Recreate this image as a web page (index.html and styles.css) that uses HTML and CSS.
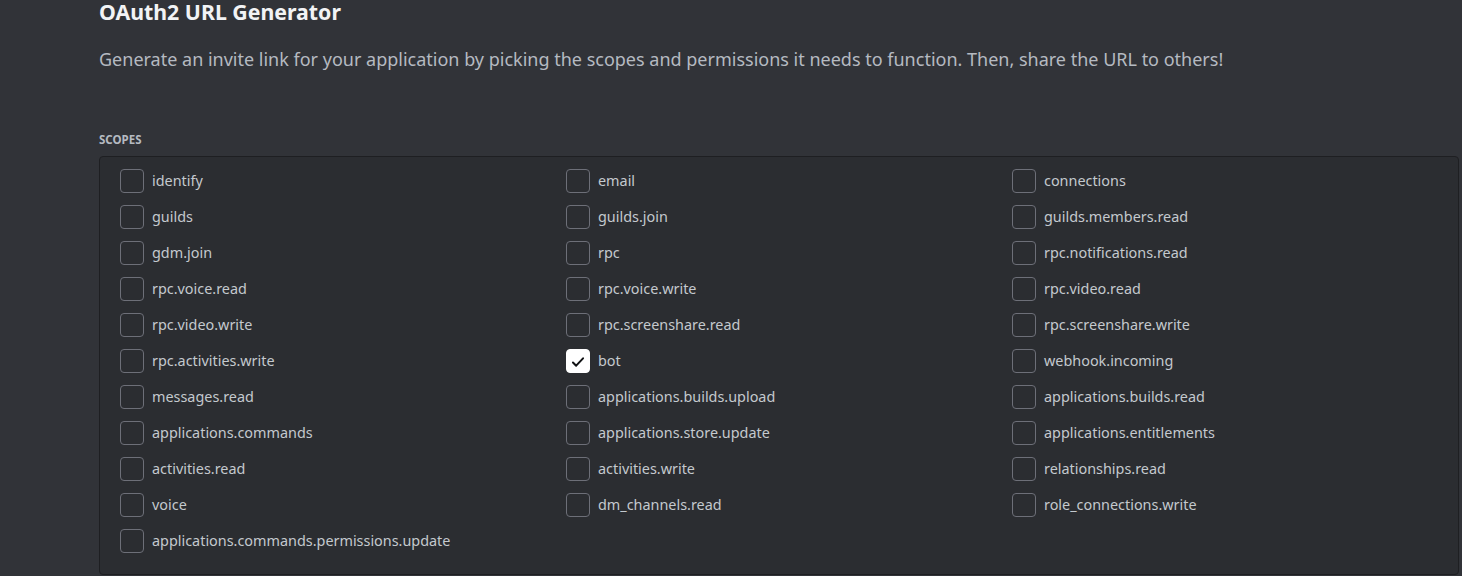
FILE: index.html
```html
<!DOCTYPE html>
<html>
<head>
<meta charset="utf-8">
<link rel="stylesheet" href="styles.css">
</head>
<body>
<main class="page">
  <h1 class="title">OAuth2 URL Generator</h1>
  <p class="desc">Generate an invite link for your application by picking the scopes and permissions it needs to function. Then, share the URL to others!</p>
  <h2 class="label">Scopes</h2>
  <div class="scopes">
    <label class="scope"><span class="box"></span><span class="name">identify</span></label>
    <label class="scope"><span class="box"></span><span class="name">email</span></label>
    <label class="scope"><span class="box"></span><span class="name">connections</span></label>
    <label class="scope"><span class="box"></span><span class="name">guilds</span></label>
    <label class="scope"><span class="box"></span><span class="name">guilds.join</span></label>
    <label class="scope"><span class="box"></span><span class="name">guilds.members.read</span></label>
    <label class="scope"><span class="box"></span><span class="name">gdm.join</span></label>
    <label class="scope"><span class="box"></span><span class="name">rpc</span></label>
    <label class="scope"><span class="box"></span><span class="name">rpc.notifications.read</span></label>
    <label class="scope"><span class="box"></span><span class="name">rpc.voice.read</span></label>
    <label class="scope"><span class="box"></span><span class="name">rpc.voice.write</span></label>
    <label class="scope"><span class="box"></span><span class="name">rpc.video.read</span></label>
    <label class="scope"><span class="box"></span><span class="name">rpc.video.write</span></label>
    <label class="scope"><span class="box"></span><span class="name">rpc.screenshare.read</span></label>
    <label class="scope"><span class="box"></span><span class="name">rpc.screenshare.write</span></label>
    <label class="scope"><span class="box"></span><span class="name">rpc.activities.write</span></label>
    <label class="scope"><span class="box checked"><svg viewBox="0 0 24 24" width="24" height="24"><path d="M6.5 12.5l3.5 3.5 7.5-8" fill="none" stroke="#111214" stroke-width="2.2" stroke-linecap="round" stroke-linejoin="round"/></svg></span><span class="name">bot</span></label>
    <label class="scope"><span class="box"></span><span class="name">webhook.incoming</span></label>
    <label class="scope"><span class="box"></span><span class="name">messages.read</span></label>
    <label class="scope"><span class="box"></span><span class="name">applications.builds.upload</span></label>
    <label class="scope"><span class="box"></span><span class="name">applications.builds.read</span></label>
    <label class="scope"><span class="box"></span><span class="name">applications.commands</span></label>
    <label class="scope"><span class="box"></span><span class="name">applications.store.update</span></label>
    <label class="scope"><span class="box"></span><span class="name">applications.entitlements</span></label>
    <label class="scope"><span class="box"></span><span class="name">activities.read</span></label>
    <label class="scope"><span class="box"></span><span class="name">activities.write</span></label>
    <label class="scope"><span class="box"></span><span class="name">relationships.read</span></label>
    <label class="scope"><span class="box"></span><span class="name">voice</span></label>
    <label class="scope"><span class="box"></span><span class="name">dm_channels.read</span></label>
    <label class="scope"><span class="box"></span><span class="name">role_connections.write</span></label>
    <label class="scope"><span class="box"></span><span class="name">applications.commands.permissions.update</span></label>
  </div>
</main>
</body>
</html>
```
FILE: styles.css
```css
html, body {
  margin: 0;
  padding: 0;
  background: #313338;
  height: 100%;
  overflow: hidden;
}
body {
  font-family: "Noto Sans", "Open Sans", sans-serif;
  color: #b5bac1;
}
.page {
  padding: 0 3px 0 99px;
}
.title {
  margin: 0;
  font-size: 21.3px;
  line-height: 24px;
  font-weight: 700;
  color: #f2f3f5;
}
.desc {
  margin: 23px 0 0;
  font-size: 18px;
  line-height: 24px;
  color: #b5bac1;
}
.label {
  margin: 61px 0 0;
  font-size: 11.5px;
  line-height: 16px;
  font-weight: 700;
  text-transform: uppercase;
  letter-spacing: 0;
  color: #b5bac1;
}
.scopes {
  margin-top: 8px;
  background: #2b2d31;
  border: 1px solid #1e1f22;
  border-radius: 4px;
  padding: 12px 0 21px 20px;
  display: grid;
  grid-template-columns: repeat(3, 446px);
  row-gap: 12px;
}
.scope {
  display: flex;
  align-items: center;
  gap: 8px;
  height: 24px;
}
.box {
  box-sizing: border-box;
  width: 24px;
  height: 24px;
  border: 1px solid #6d6f78;
  border-radius: 4px;
  flex: none;
  display: flex;
}
.box.checked {
  background: #ffffff;
  border-color: #ffffff;
}
.name {
  font-size: 14.4px;
  line-height: 20px;
  color: #c4c9ce;
}
```
